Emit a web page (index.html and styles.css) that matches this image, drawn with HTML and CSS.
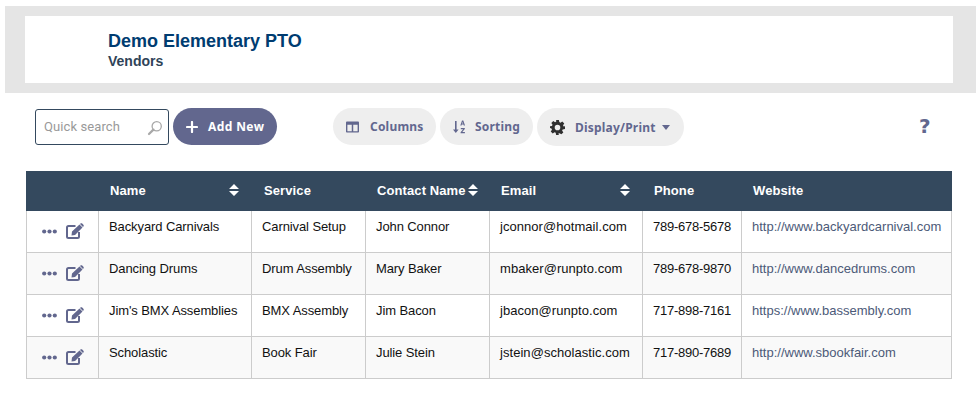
FILE: index.html
```html
<!DOCTYPE html>
<html lang="en">
<head>
<meta charset="utf-8">
<title>Vendors</title>
<link rel="stylesheet" href="styles.css">
</head>
<body>
<header class="banner">
  <div class="banner-inner">
    <h1 class="org">Demo Elementary PTO</h1>
    <h2 class="page">Vendors</h2>
  </div>
</header>
<div class="toolbar">
  <div class="search">
    <span class="search-text">Quick search</span>
    <svg class="search-icon" viewBox="0 0 16 16" width="16" height="16"><circle cx="9.7" cy="6.3" r="4.6" fill="none" stroke="#a8a8a8" stroke-width="1.3"/><path d="M6.4 9.6 2 14" stroke="#a8a8a8" stroke-width="2.2" stroke-linecap="round"/></svg>
  </div>
  <button class="add" type="button">
    <svg viewBox="0 0 12 12" width="12" height="12"><path d="M6 1v10M1 6h10" stroke="#fff" stroke-width="2.2" stroke-linecap="round"/></svg>
    <span>Add New</span>
  </button>
  <div class="group">
    <button class="pill pill-columns" type="button">
      <svg viewBox="0 0 14 12" width="13" height="12"><path fill="#62678e" fill-rule="evenodd" d="M0 1.2C0 .5.5 0 1.2 0h11.6c.7 0 1.2.5 1.2 1.2v9.600c0 .7-.5 1.200-1.200 1.200H1.200C.5 12 0 11.500 0 10.800ZM1.500 3.500v7h4.700v-7Zm6.300 0v7h4.700v-7Z"/></svg>
      <span>Columns</span>
    </button>
    <button class="pill pill-sorting" type="button">
      <svg viewBox="0 0 14 14" width="14" height="14"><path fill="#62678e" d="M3 1h1.600v8.500h2L3.800 13 1 9.500h2Z"/><path fill="#62678e" d="M10 0.500h1.300l1.700 5h-1.200l-.3-1h-1.700l-.3 1H8.300Zm.6 1.500-.5 1.600h1.100ZM8.800 8h4v1l-2.500 3h2.600v1.200H8.600v-1l2.500-3H8.800Z"/></svg>
      <span>Sorting</span>
    </button>
    <button class="pill pill-display" type="button">
      <svg viewBox="0 0 16 16" width="15" height="15"><path fill="#2f2f2f" fill-rule="evenodd" d="M6.500 0h3l.4 2.200 1.300.6L13.100 1.500l2.100 2.100-1.300 1.900.6 1.300L16 6.700v2.900l-2.500.4-.6 1.300 1.300 1.900-2.100 2.100-1.900-1.300-1.300.5L9.500 16h-3l-.4-2.500-1.300-.5-1.900 1.300L.8 12.200l1.300-1.900-.6-1.300L0 8.600V6.700l2.100-.4.600-1.300-1.300-1.900L3.500 1l1.900 1.300 1.300-.6ZM8 5a3 3 0 1 0 0 6 3 3 0 0 0 0-6Z"/></svg>
      <span>Display/Print</span>
      <svg class="caret" viewBox="0 0 8 5" width="8" height="5"><path fill="#62678e" d="M0 0h8L4 5Z"/></svg>
    </button>
  </div>
  <span class="help">?</span>
</div>
<table class="vendors">
  <colgroup>
    <col class="c0"><col class="c1"><col class="c2"><col class="c3"><col class="c4"><col class="c5"><col class="c6">
  </colgroup>
  <thead>
    <tr>
      <th></th>
      <th><div class="th-in th-name"><span>Name</span><svg class="sort" viewBox="0 0 10 12" width="10" height="12"><path fill="#fff" d="M5 0l5 5H0ZM5 12l5-5H0Z"/></svg></div></th>
      <th><div class="th-in th-service"><span>Service</span></div></th>
      <th><div class="th-in th-contact"><span>Contact Name</span><svg class="sort" viewBox="0 0 10 12" width="10" height="12"><path fill="#fff" d="M5 0l5 5H0ZM5 12l5-5H0Z"/></svg></div></th>
      <th><div class="th-in th-email"><span>Email</span><svg class="sort" viewBox="0 0 10 12" width="10" height="12"><path fill="#fff" d="M5 0l5 5H0ZM5 12l5-5H0Z"/></svg></div></th>
      <th><div class="th-in th-phone"><span>Phone</span></div></th>
      <th><div class="th-in th-web"><span>Website</span></div></th>
    </tr>
  </thead>
  <tbody>
    <tr>
      <td class="act"><div class="acts"><svg viewBox="0 0 15 5" width="15" height="5"><g fill="#62678e"><circle cx="2.200" cy="2.500" r="2.100"/><circle cx="7.500" cy="2.500" r="2.100"/><circle cx="12.800" cy="2.500" r="2.100"/></g></svg><svg viewBox="0 0 18 16" width="18" height="16"><path fill="none" stroke="#62678e" stroke-width="2" d="M9.500 3H2.500C1.700 3 1 3.700 1 4.500v9C1 14.300 1.700 15 2.500 15h9c.8 0 1.500-.7 1.500-1.500V9"/><path fill="#62678e" d="M6 8.500 13.500 1.500 16.500 4.500 9 12l-3.500.5ZM14.500.6c.5-.5 1.200-.5 1.700 0l1.200 1.200c.5.500.5 1.200 0 1.700l-.4.400-3-3Z"/></svg></div></td>
      <td>Backyard Carnivals</td><td>Carnival Setup</td><td>John Connor</td><td>jconnor@hotmail.com</td><td>789-678-5678</td><td class="link">http://www.backyardcarnival.com</td>
    </tr>
    <tr>
      <td class="act"><div class="acts"><svg viewBox="0 0 15 5" width="15" height="5"><g fill="#62678e"><circle cx="2.200" cy="2.500" r="2.100"/><circle cx="7.500" cy="2.500" r="2.100"/><circle cx="12.800" cy="2.500" r="2.100"/></g></svg><svg viewBox="0 0 18 16" width="18" height="16"><path fill="none" stroke="#62678e" stroke-width="2" d="M9.500 3H2.500C1.700 3 1 3.700 1 4.500v9C1 14.300 1.700 15 2.500 15h9c.8 0 1.500-.7 1.500-1.500V9"/><path fill="#62678e" d="M6 8.500 13.500 1.500 16.500 4.500 9 12l-3.500.5ZM14.500.6c.5-.5 1.200-.5 1.700 0l1.200 1.200c.5.500.5 1.200 0 1.700l-.4.400-3-3Z"/></svg></div></td>
      <td>Dancing Drums</td><td>Drum Assembly</td><td>Mary Baker</td><td>mbaker@runpto.com</td><td>789-678-9870</td><td class="link">http://www.dancedrums.com</td>
    </tr>
    <tr>
      <td class="act"><div class="acts"><svg viewBox="0 0 15 5" width="15" height="5"><g fill="#62678e"><circle cx="2.200" cy="2.500" r="2.100"/><circle cx="7.500" cy="2.500" r="2.100"/><circle cx="12.800" cy="2.500" r="2.100"/></g></svg><svg viewBox="0 0 18 16" width="18" height="16"><path fill="none" stroke="#62678e" stroke-width="2" d="M9.500 3H2.500C1.700 3 1 3.700 1 4.500v9C1 14.300 1.700 15 2.500 15h9c.8 0 1.500-.7 1.500-1.500V9"/><path fill="#62678e" d="M6 8.500 13.500 1.500 16.500 4.500 9 12l-3.500.5ZM14.500.6c.5-.5 1.200-.5 1.700 0l1.200 1.200c.5.500.5 1.200 0 1.700l-.4.400-3-3Z"/></svg></div></td>
      <td>Jim's BMX Assemblies</td><td>BMX Assembly</td><td>Jim Bacon</td><td>jbacon@runpto.com</td><td>717-898-7161</td><td class="link">https://www.bassembly.com</td>
    </tr>
    <tr>
      <td class="act"><div class="acts"><svg viewBox="0 0 15 5" width="15" height="5"><g fill="#62678e"><circle cx="2.200" cy="2.500" r="2.100"/><circle cx="7.500" cy="2.500" r="2.100"/><circle cx="12.800" cy="2.500" r="2.100"/></g></svg><svg viewBox="0 0 18 16" width="18" height="16"><path fill="none" stroke="#62678e" stroke-width="2" d="M9.500 3H2.500C1.700 3 1 3.700 1 4.500v9C1 14.300 1.700 15 2.500 15h9c.8 0 1.500-.7 1.500-1.500V9"/><path fill="#62678e" d="M6 8.500 13.500 1.500 16.500 4.500 9 12l-3.500.5ZM14.500.6c.5-.5 1.200-.5 1.700 0l1.200 1.200c.5.500.5 1.200 0 1.700l-.4.400-3-3Z"/></svg></div></td>
      <td>Scholastic</td><td>Book Fair</td><td>Julie Stein</td><td>jstein@scholastic.com</td><td>717-890-7689</td><td class="link">http://www.sbookfair.com</td>
    </tr>
  </tbody>
</table>
</body>
</html>
```

FILE: styles.css
```css
* { box-sizing: border-box; }
html, body { margin: 0; padding: 0; background: #fff; overflow: hidden; }
body { font-family: "Liberation Sans", Arial, sans-serif; height: 406px; }

.banner { margin: 6px 0 0 5px; padding: 10px 23px 10px 20px; background: #e5e5e5; height: 87px; }
.banner-inner { background: #fff; height: 67px; padding: 15px 0 0 83px; }
.org { margin: 0; font-size: 18px; line-height: 20px; font-weight: 700; color: #003c71; }
.page { margin: 1px 0 0; font-size: 14px; line-height: 18px; font-weight: 700; color: #2f4358; }

.toolbar { display: flex; align-items: flex-start; margin: 15px 0 0 35px; height: 63px; }
.search { width: 134px; height: 36px; margin-top: 1px; border: 1px solid #34495e; border-radius: 3px; padding: 0 5px 0 8px; display: flex; align-items: center; justify-content: space-between; }
.search-text { font-family: Roboto, sans-serif; font-size: 13px; letter-spacing: .1px; color: #999; margin-top: -2px; }
.search-icon { margin-top: 2px; }

button { font: inherit; border: 0; cursor: pointer; }
.add { margin-left: 4px; width: 104px; height: 37px; border-radius: 19px; background: #62678e; color: #fff; display: flex; align-items: center; padding: 0 0 0 13px; gap: 10px; font-family: "Noto Sans", sans-serif; font-size: 12px; font-weight: 700; letter-spacing: .4px; }

.group { display: flex; gap: 4px; margin-left: 56px; }
.pill { height: 37px; border-radius: 19px; background: #eee; color: #62678e; display: flex; align-items: center; padding: 0 0 0 13px; font-family: "Noto Sans", sans-serif; font-size: 12px; font-weight: 700; letter-spacing: .2px; }
.pill-columns { width: 103px; gap: 11px; }
.pill-sorting { width: 93px; gap: 9px; }
.pill-sorting svg { margin-left: -1px; }
.pill-display { width: 147px; gap: 10px; height: 38px; }
.caret { margin-left: -4px; }

.help { margin-left: 235px; margin-top: 5px; font-family: "DejaVu Sans", sans-serif; font-size: 20px; line-height: 26px; font-weight: 700; color: #62678e; }

.vendors { margin-left: 26px; width: 925px; table-layout: fixed; border-collapse: collapse; font-size: 13px; letter-spacing: -.1px; color: #111; }
.c0 { width: 72px; }
.c1 { width: 153px; }
.c2 { width: 114px; }
.c3 { width: 124px; }
.c4 { width: 153px; }
.c5 { width: 99px; }
.c6 { width: 210px; }

.vendors th { height: 39px; padding: 0 0 2px; background: #34495e; border: 1px solid #34495e; color: #fff; font-size: 13px; font-weight: 700; text-align: left; letter-spacing: .1px; white-space: nowrap; }
.th-in { display: flex; align-items: center; justify-content: space-between; }
.th-name { padding: 0 12px 0 11px; }
.th-service { padding-left: 12px; }
.th-contact { padding: 0 11px 0 11px; }
.th-email { padding: 0 12px 0 11px; }
.th-phone { padding-left: 11px; }
.th-web { padding-left: 11px; }
.sort { flex: none; }

.vendors td { height: 42px; padding: 8px 0 0 10px; vertical-align: top; border: 1px solid #ccc; line-height: 15px; white-space: nowrap; }
.vendors td:nth-child(5) { letter-spacing: .05px; }
.vendors td:nth-child(6) { letter-spacing: -.25px; }
.vendors tbody tr:nth-child(even) td { background: #f9f9f9; }
.vendors td.link { color: #4c5a78; padding-left: 10px; letter-spacing: 0; }
.vendors td.act { padding: 12px 0 0 15px; }
.acts { display: flex; align-items: center; gap: 9px; }
```
